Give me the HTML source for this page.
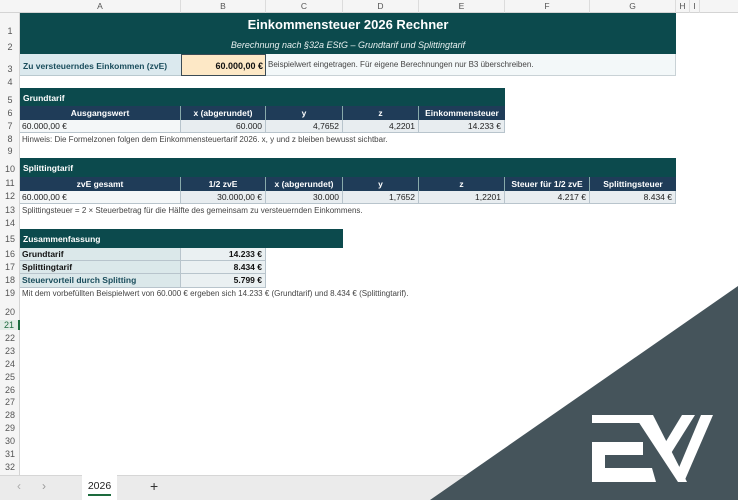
<!DOCTYPE html>
<html><head><meta charset="utf-8"><style>
*{margin:0;padding:0;box-sizing:border-box}
body{width:738px;height:500px;overflow:hidden;background:#fff;font-family:"Liberation Sans",sans-serif;position:relative;font-size:8.5px;color:#222}
.a{position:absolute;white-space:nowrap;overflow:hidden}
.rh{position:absolute;left:0;width:20px;text-align:center;color:#555;font-size:9px;border-right:1px solid #d4d4d4;background:#f5f5f5}
.ch{position:absolute;top:0;height:13px;text-align:center;color:#555;font-size:8.5px;line-height:13px;border-right:1px solid #dcdcdc}
.band{background:#0c4a4d;color:#fff;font-weight:bold;padding-left:3px;font-size:8.5px}
.hd{background:#1f3c58;color:#fff;font-weight:bold;text-align:center;border-right:1px solid #8aa;font-size:8.5px;line-height:14px}
.v{background:#e8edf0;text-align:right;padding-right:3px;border-right:1px solid #b8c4cc;border-bottom:1px solid #b8c4cc;line-height:13px}
.note{color:#444;font-size:8px;padding-left:2px}
</style></head><body>
<div class="a" style="left:0;top:0;width:738px;height:13px;background:#f5f5f5;border-bottom:1px solid #d4d4d4"></div>
<div class="ch" style="left:20px;width:161px">A</div>
<div class="ch" style="left:181px;width:85px">B</div>
<div class="ch" style="left:266px;width:77px">C</div>
<div class="ch" style="left:343px;width:76px">D</div>
<div class="ch" style="left:419px;width:86px">E</div>
<div class="ch" style="left:505px;width:85px">F</div>
<div class="ch" style="left:590px;width:86px">G</div>
<div class="ch" style="left:676px;width:14px">H</div>
<div class="ch" style="left:690px;width:10px">I</div>

<div class="rh" style="top:13px;height:462px"></div>
<div class="rh" style="top:26px;background:none;border:0">1</div>
<div class="rh" style="top:42px;background:none;border:0">2</div>
<div class="rh" style="top:64px;background:none;border:0">3</div>
<div class="rh" style="top:77px;background:none;border:0">4</div>
<div class="rh" style="top:95px;background:none;border:0">5</div>
<div class="rh" style="top:108px;background:none;border:0">6</div>
<div class="rh" style="top:121px;background:none;border:0">7</div>
<div class="rh" style="top:134px;background:none;border:0">8</div>
<div class="rh" style="top:146px;background:none;border:0">9</div>
<div class="rh" style="top:164px;background:none;border:0">10</div>
<div class="rh" style="top:178px;background:none;border:0">11</div>
<div class="rh" style="top:191px;background:none;border:0">12</div>
<div class="rh" style="top:205px;background:none;border:0">13</div>
<div class="rh" style="top:218px;background:none;border:0">14</div>
<div class="rh" style="top:234px;background:none;border:0">15</div>
<div class="rh" style="top:249px;background:none;border:0">16</div>
<div class="rh" style="top:262px;background:none;border:0">17</div>
<div class="rh" style="top:275px;background:none;border:0">18</div>
<div class="rh" style="top:288px;background:none;border:0">19</div>
<div class="rh" style="top:307px;background:none;border:0">20</div>
<div class="rh" style="top:320px;background:#e2ece6;color:#1d6b3e;border-right:2px solid #1d6b3e">21</div>
<div class="rh" style="top:333px;background:none;border:0">22</div>
<div class="rh" style="top:346px;background:none;border:0">23</div>
<div class="rh" style="top:359px;background:none;border:0">24</div>
<div class="rh" style="top:372px;background:none;border:0">25</div>
<div class="rh" style="top:385px;background:none;border:0">26</div>
<div class="rh" style="top:397px;background:none;border:0">27</div>
<div class="rh" style="top:410px;background:none;border:0">28</div>
<div class="rh" style="top:423px;background:none;border:0">29</div>
<div class="rh" style="top:436px;background:none;border:0">30</div>
<div class="rh" style="top:449px;background:none;border:0">31</div>
<div class="rh" style="top:462px;background:none;border:0">32</div>

<div class="a" style="left:20px;top:13px;width:656px;height:41px;background:#0c4a4d"></div>
<div class="a" style="left:20px;top:17px;width:656px;text-align:center;color:#fff;font-weight:bold;font-size:13px">Einkommensteuer 2026 Rechner</div>
<div class="a" style="left:20px;top:40px;width:656px;text-align:center;color:#e8f0f0;font-style:italic;font-size:9px">Berechnung nach §32a EStG – Grundtarif und Splittingtarif</div>
<div class="a" style="left:20px;top:54px;width:161px;height:22px;background:#dbe9ee;color:#1a4d5c;font-weight:bold;line-height:24px;padding-left:3px;font-size:8.5px;border-bottom:1px solid #b9c9cf">Zu versteuerndes Einkommen (zvE)</div>
<div class="a" style="left:181px;top:54px;width:85px;height:22px;background:#fde8c6;border:1px solid #3a4b55;text-align:right;padding-right:2px;font-weight:bold;line-height:22px;font-size:9px;color:#111">60.000,00 €</div>
<div class="a" style="left:266px;top:54px;width:410px;height:22px;background:#f3f8f9;color:#444;line-height:22px;padding-left:2px;font-size:8px;border-bottom:1px solid #c9d2d6;border-right:1px solid #c9d2d6">Beispielwert eingetragen. Für eigene Berechnungen nur B3 überschreiben.</div>

<div class="a band" style="left:20px;top:88px;width:485px;height:18px;line-height:20px">Grundtarif</div>
<div class="a hd" style="left:20px;top:106px;width:161px;height:14px">Ausgangswert</div>
<div class="a hd" style="left:181px;top:106px;width:85px;height:14px">x (abgerundet)</div>
<div class="a hd" style="left:266px;top:106px;width:77px;height:14px">y</div>
<div class="a hd" style="left:343px;top:106px;width:76px;height:14px">z</div>
<div class="a hd" style="left:419px;top:106px;width:86px;height:14px;border-right:0">Einkommensteuer</div>
<div class="a v" style="left:20px;top:120px;width:161px;height:13px;text-align:left;padding-left:2px;background:#f4f7f8">60.000,00 €</div>
<div class="a v" style="left:181px;top:120px;width:85px;height:13px">60.000</div>
<div class="a v" style="left:266px;top:120px;width:77px;height:13px">4,7652</div>
<div class="a v" style="left:343px;top:120px;width:76px;height:13px">4,2201</div>
<div class="a v" style="left:419px;top:120px;width:86px;height:13px">14.233 €</div>
<div class="a note" style="left:20px;top:135px">Hinweis: Die Formelzonen folgen dem Einkommensteuertarif 2026. x, y und z bleiben bewusst sichtbar.</div>

<div class="a band" style="left:20px;top:158px;width:656px;height:19px;line-height:21px">Splittingtarif</div>
<div class="a hd" style="left:20px;top:177px;width:161px;height:14px">zvE gesamt</div>
<div class="a hd" style="left:181px;top:177px;width:85px;height:14px">1/2 zvE</div>
<div class="a hd" style="left:266px;top:177px;width:77px;height:14px">x (abgerundet)</div>
<div class="a hd" style="left:343px;top:177px;width:76px;height:14px">y</div>
<div class="a hd" style="left:419px;top:177px;width:86px;height:14px">z</div>
<div class="a hd" style="left:505px;top:177px;width:85px;height:14px">Steuer für 1/2 zvE</div>
<div class="a hd" style="left:590px;top:177px;width:86px;height:14px;border-right:0">Splittingsteuer</div>
<div class="a v" style="left:20px;top:191px;width:161px;height:13px;text-align:left;padding-left:2px;background:#f4f7f8">60.000,00 €</div>
<div class="a v" style="left:181px;top:191px;width:85px;height:13px">30.000,00 €</div>
<div class="a v" style="left:266px;top:191px;width:77px;height:13px">30.000</div>
<div class="a v" style="left:343px;top:191px;width:76px;height:13px">1,7652</div>
<div class="a v" style="left:419px;top:191px;width:86px;height:13px">1,2201</div>
<div class="a v" style="left:505px;top:191px;width:85px;height:13px">4.217 €</div>
<div class="a v" style="left:590px;top:191px;width:86px;height:13px">8.434 €</div>
<div class="a note" style="left:20px;top:206px">Splittingsteuer = 2 × Steuerbetrag für die Hälfte des gemeinsam zu versteuernden Einkommens.</div>

<div class="a band" style="left:20px;top:229px;width:323px;height:19px;line-height:21px">Zusammenfassung</div>
<div class="a v" style="left:20px;top:248px;width:161px;height:13px;text-align:left;padding-left:2px;background:#dbe8ea;font-weight:bold;color:#111">Grundtarif</div>
<div class="a v" style="left:181px;top:248px;width:85px;height:13px;background:#eaf0f2;font-weight:bold;color:#111">14.233 €</div>
<div class="a v" style="left:20px;top:261px;width:161px;height:13px;text-align:left;padding-left:2px;background:#dbe8ea;font-weight:bold;color:#111">Splittingtarif</div>
<div class="a v" style="left:181px;top:261px;width:85px;height:13px;background:#eaf0f2;font-weight:bold;color:#111">8.434 €</div>
<div class="a v" style="left:20px;top:274px;width:161px;height:14px;text-align:left;padding-left:2px;background:#dbe8ea;font-weight:bold;color:#1a4d5c">Steuervorteil durch Splitting</div>
<div class="a v" style="left:181px;top:274px;width:85px;height:14px;background:#eaf0f2;font-weight:bold;color:#111">5.799 €</div>
<div class="a note" style="left:20px;top:289px">Mit dem vorbefüllten Beispielwert von 60.000 € ergeben sich 14.233 € (Grundtarif) und 8.434 € (Splittingtarif).</div>

<div class="a" style="left:0;top:475px;width:738px;height:25px;background:#ebebeb;border-top:1px solid #d6d6d6"></div>
<div class="a" style="left:17px;top:479px;color:#aaa;font-size:12px">‹</div>
<div class="a" style="left:42px;top:479px;color:#999;font-size:12px">›</div>
<div class="a" style="left:82px;top:475px;width:35px;height:25px;background:#fff;text-align:center;font-size:10.5px;line-height:22px;color:#222">2026</div>
<div class="a" style="left:88px;top:494px;width:23px;height:2px;background:#1d6b3e"></div>
<div class="a" style="left:150px;top:478px;font-size:14px;color:#333">+</div>

<svg class="a" style="left:0;top:0" width="738" height="500">
<polygon points="738,286 738,500 430,500" fill="#45545b"/>
<g fill="#fff">
<path d="M592,415 H653 V423 H592 Z"/>
<path d="M634,415 H653 L687,482 H678 Z"/>
<path d="M592,442 H643 V455 H605 V468 H652 L656,482 H592 Z"/>
<path d="M682,415 H695 L668,458 L662,448 Z"/>
<path d="M701,415 H713 L684,482 L678,470 Z"/>
</g>
</svg>
</body></html>
